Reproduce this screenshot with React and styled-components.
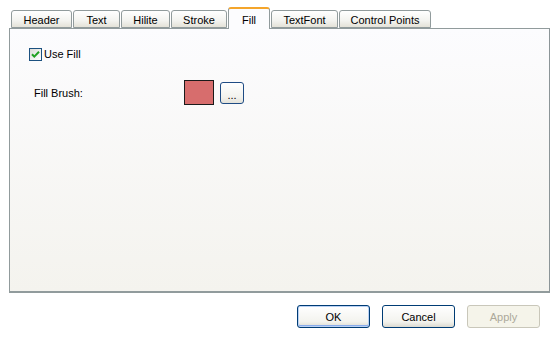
import React, { useState } from "react";
import styled, { createGlobalStyle } from "styled-components";

const GlobalStyle = createGlobalStyle`
  html, body {
    margin: 0;
    padding: 0;
    background: #ffffff;
  }
  body {
    font-family: "Liberation Sans", Arial, sans-serif;
    font-size: 11px;
    color: #000;
  }
`;

const tabs = [
  { name: "Header", width: 61 },
  { name: "Text", width: 47 },
  { name: "Hilite", width: 49 },
  { name: "Stroke", width: 56 },
  { name: "Fill", width: 42 },
  { name: "TextFont", width: 67 },
  { name: "Control Points", width: 92 },
];

export default function App() {
  const [active, setActive] = useState("Fill");
  const [useFill, setUseFill] = useState(true);

  return (
    <Page>
      <GlobalStyle />
      <TabStrip>
        {tabs.map((t) => (
          <Tab
            key={t.name}
            $width={t.width}
            $active={t.name === active}
            onClick={() => setActive(t.name)}
          >
            {t.name}
          </Tab>
        ))}
      </TabStrip>
      <Panel>
        <CheckRow onClick={() => setUseFill(!useFill)}>
          <CheckBox>
            {useFill && (
              <svg width="9" height="9" viewBox="0 0 9 9">
                <path
                  d="M1 4.2 L3.3 6.6 L8 1.8"
                  fill="none"
                  stroke="#21a121"
                  strokeWidth="2"
                />
              </svg>
            )}
          </CheckBox>
          <span>Use Fill</span>
        </CheckRow>
        <BrushRow>
          <Label>Fill Brush:</Label>
          <Swatch />
          <SmallButton>...</SmallButton>
        </BrushRow>
      </Panel>
      <ButtonRow>
        <DialogButton $default>OK</DialogButton>
        <DialogButton>Cancel</DialogButton>
        <DialogButton disabled>Apply</DialogButton>
      </ButtonRow>
    </Page>
  );
}

const Page = styled.div`
  width: 558px;
  height: 343px;
  box-sizing: border-box;
  padding: 7px 0 0 9px;
  display: flex;
  flex-direction: column;
`;

const TabStrip = styled.div`
  display: flex;
  align-items: flex-end;
  height: 21px;
  padding-left: 2px;
  gap: 1px;
  position: relative;
  z-index: 1;
`;

const Tab = styled.div`
  width: ${(p) => p.$width}px;
  height: ${(p) => (p.$active ? 22 : 18)}px;
  margin-bottom: ${(p) => (p.$active ? -1 : 0)}px;
  box-sizing: border-box;
  display: flex;
  align-items: center;
  justify-content: center;
  padding-top: ${(p) => (p.$active ? 2 : 1)}px;
  border: 1px solid #919b9c;
  border-bottom: ${(p) => (p.$active ? "none" : "1px solid #919b9c")};
  border-top: ${(p) => (p.$active ? "2px solid #f4a52b" : "1px solid #919b9c")};
  border-radius: 3px 3px 0 0;
  background: ${(p) =>
    p.$active
      ? "#fcfcfe"
      : "linear-gradient(#ffffff, #f3f3ef 60%, #e4e2d8)"};
  cursor: default;
  color: #000;
`;

const Panel = styled.div`
  width: 541px;
  height: 265px;
  box-sizing: border-box;
  border: 1px solid #919b9c;
  border-right-color: #8c9598;
  border-bottom: 2px solid #919b9c;
  background: linear-gradient(#fcfcfe, #f4f3ee);
  padding: 18px 0 0 19px;
  display: flex;
  flex-direction: column;
`;

const CheckRow = styled.label`
  display: flex;
  align-items: center;
  gap: 2px;
  height: 14px;
  cursor: default;
`;

const CheckBox = styled.span`
  width: 13px;
  height: 13px;
  box-sizing: border-box;
  border: 1px solid #1c5180;
  background: linear-gradient(135deg, #dcdcd7, #ffffff);
  display: flex;
  align-items: center;
  justify-content: center;
`;

const BrushRow = styled.div`
  display: flex;
  align-items: center;
  margin-top: 19px;
  padding-left: 5px;
`;

const Label = styled.span`
  width: 150px;
`;

const Swatch = styled.div`
  width: 30px;
  height: 25px;
  box-sizing: border-box;
  border: 1px solid #1a1a1a;
  background: #d76d6d;
`;

const SmallButton = styled.button`
  margin-left: 6px;
  width: 24px;
  height: 22px;
  box-sizing: border-box;
  padding: 5px 0 0;
  border: 1px solid #1f4c84;
  border-radius: 3px;
  background: linear-gradient(#ffffff, #f2f2ed 70%, #e3e2da);
  font-family: inherit;
  font-size: 11px;
  color: #000;
  line-height: 1;
`;

const ButtonRow = styled.div`
  display: flex;
  justify-content: flex-end;
  gap: 12px;
  margin-top: 12px;
  width: 531px;
`;

const DialogButton = styled.button`
  width: 73px;
  height: 23px;
  box-sizing: border-box;
  border: 1px solid ${(p) => (p.disabled ? "#c9c7ba" : "#003c74")};
  border-radius: 3px;
  background: ${(p) =>
    p.disabled
      ? "#f5f4ea"
      : "linear-gradient(#ffffff, #f3f3ee 75%, #dcdad0)"};
  box-shadow: ${(p) =>
    p.$default
      ? "inset 0 0 0 1px #b9d1f4, inset 0 -1px 0 1px #89acec"
      : "none"};
  font-family: inherit;
  font-size: 11px;
  color: ${(p) => (p.disabled ? "#aca899" : "#000")};
  padding: 0;
`;
